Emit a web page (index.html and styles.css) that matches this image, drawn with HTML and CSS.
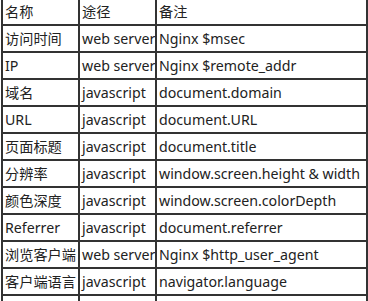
FILE: index.html
```html
<!DOCTYPE html>
<html lang="zh">
<head>
<meta charset="utf-8">
<link rel="stylesheet" href="styles.css">
</head>
<body>
<table class="info">
  <colgroup><col class="c1"><col class="c2"><col class="c3"></colgroup>
  <tr><td>名称</td><td>途径</td><td>备注</td></tr>
  <tr><td>访问时间</td><td>web server</td><td>Nginx $msec</td></tr>
  <tr><td>IP</td><td>web server</td><td>Nginx $remote_addr</td></tr>
  <tr><td>域名</td><td>javascript</td><td>document.domain</td></tr>
  <tr><td>URL</td><td>javascript</td><td>document.URL</td></tr>
  <tr><td>页面标题</td><td>javascript</td><td>document.title</td></tr>
  <tr><td>分辨率</td><td>javascript</td><td>window.screen.height &amp; width</td></tr>
  <tr><td>颜色深度</td><td>javascript</td><td>window.screen.colorDepth</td></tr>
  <tr><td>Referrer</td><td>javascript</td><td>document.referrer</td></tr>
  <tr><td>浏览客户端</td><td>web server</td><td>Nginx $http_user_agent</td></tr>
  <tr><td>客户端语言</td><td>javascript</td><td>navigator.language</td></tr>
  <tr><td>&nbsp;</td><td>&nbsp;</td><td>&nbsp;</td></tr>
</table>
</body>
</html>
```
FILE: styles.css
```css
html, body {
  margin: 0;
  padding: 0;
  background: #fff;
}
body {
  font-family: "Noto Sans", "Noto Sans CJK SC", sans-serif;
  font-size: 14.2px;
  color: #222;
  overflow: hidden;
}
.info {
  border-collapse: collapse;
  table-layout: fixed;
  width: 365px;
  margin: -3px 0 0 1px;
}
.c1 { width: 77px; }
.c2 { width: 77px; }
.c3 { width: 211px; }
.info td {
  border: 2px solid #333;
  height: 25px;
  padding: 0 2px;
  white-space: nowrap;
  overflow: hidden;
  line-height: 20px;
  vertical-align: middle;
}
```
